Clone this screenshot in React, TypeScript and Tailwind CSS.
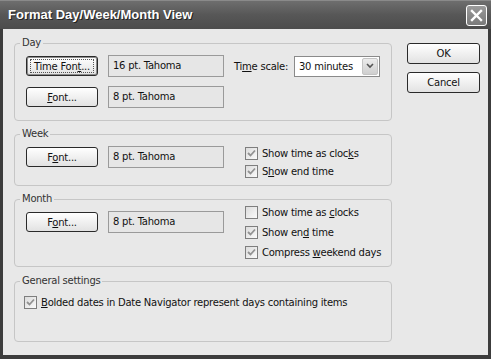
import React from "react";

function Mn({ children }: { children: React.ReactNode }) {
  return <span className="underline underline-offset-[1px]">{children}</span>;
}

function Btn({ children, def, className = "" }: { children: React.ReactNode; def?: boolean; className?: string }) {
  return (
    <div
      className={
        "flex shrink-0 items-center justify-center whitespace-nowrap rounded-[3px] border border-[#2a2a2a] bg-gradient-to-b from-[#ffffff] to-[#e2e2e2] text-[#111] " +
        (def ? "shadow-[inset_0_0_0_1px_#8c8c8c] " : "") +
        className
      }
    >
      {def ? (
        <span className="flex h-[14px] w-[64px] items-center justify-center border border-dotted border-[#555]">{children}</span>
      ) : (
        <span>{children}</span>
      )}
    </div>
  );
}

function Field({ text }: { text: string }) {
  return (
    <div className="h-[22px] w-[116px] shrink-0 border border-[#9a9a9a] bg-[#e6e6e6] pl-[4px] pt-[3px] leading-[14px] text-[#111]">
      {text}
    </div>
  );
}

function Check({ on, children }: { on: boolean; children: React.ReactNode }) {
  return (
    <div className="flex h-[18px] items-center gap-[4px] whitespace-nowrap">
      <div className="flex h-[13px] w-[13px] shrink-0 items-center justify-center border border-[#7e7e7e] bg-gradient-to-br from-[#dcdcdc] to-[#fafafa]">
        {on && (
          <svg width="9" height="9" viewBox="0 0 9 9">
            <path d="M1 4 L3.5 6.5 L8 1.5" fill="none" stroke="#929292" strokeWidth="1.8" />
          </svg>
        )}
      </div>
      <span className="text-[#111]">{children}</span>
    </div>
  );
}

// group box: the caption sits over the top border line
function Group({ title, className = "", children }: { title: string; className?: string; children: React.ReactNode }) {
  return (
    <div className={"rounded-[4px] border border-[#c6c6c6] px-[11px] " + className}>
      <div className="-mt-[8px] ml-[-6px] w-fit bg-[#e8e8e8] px-[2px] leading-[14px] text-[#333]">{title}</div>
      {children}
    </div>
  );
}

export default function App() {
  return (
    <div
      className="flex h-[359px] w-[491px] flex-col bg-[#3c3c3c] text-[10px] tracking-[-0.25px]"
      style={{ fontFamily: '"DejaVu Sans", Verdana, sans-serif' }}
    >
      {/* title bar */}
      <div className="flex h-[29px] shrink-0 items-center justify-between border-t border-[#8a8a8a] bg-gradient-to-b from-[#6e6e6e] via-[#575757] to-[#4c4c4c] pl-[8px] pr-[4px]">
        <span
          className="text-[13px] font-bold tracking-normal text-white [text-shadow:1px_1px_0_#222]"
          style={{ fontFamily: '"Liberation Sans", Arial, sans-serif' }}
        >
          Format Day/Week/Month View
        </span>
        <div className="flex h-[21px] w-[21px] items-center justify-center rounded-[3px] border border-white bg-gradient-to-b from-[#9a9a9a] to-[#7a7a7a]">
          <svg width="13" height="13" viewBox="0 0 13 13">
            <path d="M2 2 L11 11 M11 2 L2 11" stroke="white" strokeWidth="2.4" strokeLinecap="square" />
          </svg>
        </div>
      </div>

      {/* body */}
      <div className="mx-[3px] mb-[4px] flex flex-1 gap-[15px] bg-[#e8e8e8] pl-[11px]">
        <div className="flex w-[378px] shrink-0 flex-col">
          <Group title="Day" className="mt-[14px] h-[78px]">
            <div className="mt-[5px] flex items-center whitespace-nowrap">
              <Btn def className="h-[20px] w-[72px]">
                Time Fon<Mn>t</Mn>...
              </Btn>
              <div className="ml-[10px]">
                <Field text="16 pt. Tahoma" />
              </div>
              <span className="ml-[10px] w-[60px] shrink-0 text-[#111]">
                Ti<Mn>m</Mn>e scale:
              </span>
              <div className="flex h-[21px] w-[86px] shrink-0 items-center border border-[#8a8a8a] bg-white pl-[4px] text-[#111]">
                <span className="flex-1">30 minutes</span>
                <div className="mr-[1px] flex h-[17px] w-[16px] items-center justify-center rounded-[2px] border border-[#c4c4c4] bg-gradient-to-b from-[#ececec] to-[#cfcfcf]">
                  <svg width="8" height="6" viewBox="0 0 8 6">
                    <path d="M1 1 L4 4 L7 1" fill="none" stroke="#555" strokeWidth="1.6" />
                  </svg>
                </div>
              </div>
            </div>
            <div className="mt-[9px] flex items-center gap-[10px]">
              <Btn className="h-[20px] w-[72px]">
                <Mn>F</Mn>ont...
              </Btn>
              <Field text="8 pt. Tahoma" />
            </div>
          </Group>

          <Group title="Week" className="mt-[13px] h-[52px]">
            <div className="flex items-start">
              <div className="mt-[5px] flex items-center gap-[10px]">
                <Btn className="h-[20px] w-[72px]">
                  F<Mn>o</Mn>nt...
                </Btn>
                <Field text="8 pt. Tahoma" />
              </div>
              <div className="ml-[21px] mt-[3px] flex flex-col">
                <Check on>
                  Show time as cloc<Mn>k</Mn>s
                </Check>
                <Check on>
                  S<Mn>h</Mn>ow end time
                </Check>
              </div>
            </div>
          </Group>

          <Group title="Month" className="mt-[13px] h-[68px]">
            <div className="flex items-start">
              <div className="mt-[5px] flex items-center gap-[10px]">
                <Btn className="h-[20px] w-[72px]">
                  F<Mn>o</Mn>nt...
                </Btn>
                <Field text="8 pt. Tahoma" />
              </div>
              <div className="ml-[21px] mt-[-3px] flex flex-col gap-[2px]">
                <Check on={false}>
                  Show time as <Mn>c</Mn>locks
                </Check>
                <Check on>
                  Show en<Mn>d</Mn> time
                </Check>
                <Check on>
                  Compress <Mn>w</Mn>eekend days
                </Check>
              </div>
            </div>
          </Group>

          <Group title="General settings" className="mt-[14px] h-[61px]">
            <div className="ml-[-2px] mt-[5px]">
              <Check on>
                <Mn>B</Mn>olded dates in Date Navigator represent days containing items
              </Check>
            </div>
          </Group>
        </div>

        <div className="flex flex-col gap-[8px] pt-[14px]">
          <Btn className="h-[21px] w-[73px]">OK</Btn>
          <Btn className="h-[21px] w-[73px]">Cancel</Btn>
        </div>
      </div>
    </div>
  );
}
